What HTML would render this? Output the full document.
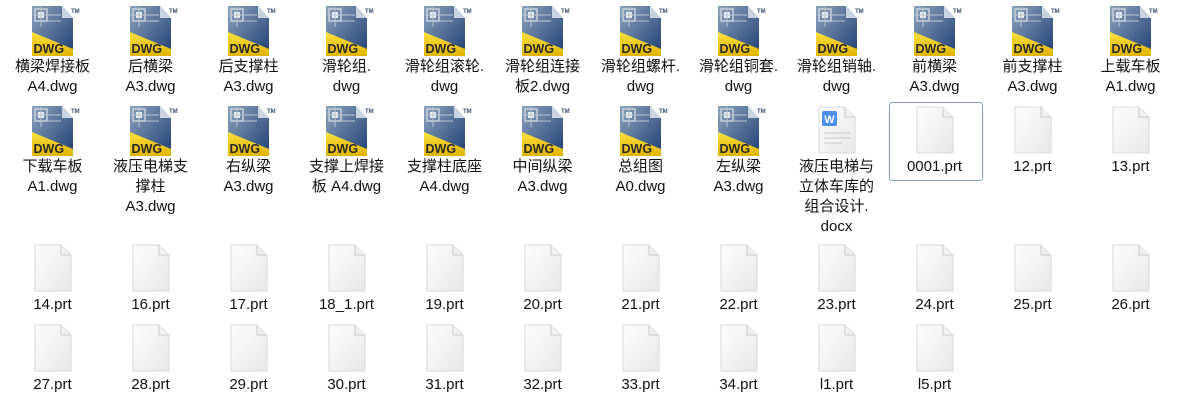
<!DOCTYPE html>
<html><head><meta charset="utf-8"><style>
body{margin:0;width:1181px;height:409px;background:#fff;position:relative;overflow:hidden;font-family:"Liberation Sans","Noto Sans CJK SC",sans-serif;font-size:15px;color:#111}
.c{position:absolute;width:96px;text-align:center}
.ic{height:54px;position:relative}
.ic svg{position:absolute;left:50%;transform:translateX(-50%)}
.t{line-height:20px;margin-top:0}
.sel{position:absolute;left:889px;top:102px;width:92px;height:77px;border:1px solid #7da2ce;border-radius:3px;background:#fff}
</style></head><body>
<svg width="0" height="0" style="position:absolute"><defs>
<linearGradient id="bl" x1="0" y1="0" x2="1" y2="1"><stop offset="0" stop-color="#8aa2bd"/><stop offset="1" stop-color="#1f3f72"/></linearGradient>
<linearGradient id="yl" x1="0" y1="0" x2="0" y2="1"><stop offset="0" stop-color="#f9e040"/><stop offset="1" stop-color="#e2b400"/></linearGradient>
<linearGradient id="pg" x1="0" y1="0" x2="1" y2="1"><stop offset="0" stop-color="#fdfdfd"/><stop offset="1" stop-color="#e8e8e8"/></linearGradient>
<symbol id="dwg" viewBox="0 0 52 52">
<path d="M1 1H31L42 13V51H1Z" fill="url(#bl)"/>
<path d="M31 1V13H42" fill="#c9d4e2"/>
<rect x="4" y="4" width="12" height="12" fill="none" stroke="#c8d0dc" stroke-width="1.5"/>
<rect x="7" y="7" width="6" height="6" fill="#e6ecf2"/>
<path d="M10 2V22M2 10H30M16 16H30" stroke="#b9c3d1" stroke-width="1"/>
<path d="M1 27L42 44V51H1Z" fill="url(#yl)"/>
<text x="2.5" y="48" font-family="Liberation Sans" font-weight="bold" font-size="12.5" fill="#2a2a2a">DWG</text>
<text x="40" y="8" font-family="Liberation Sans" font-weight="bold" font-size="6" fill="#3b4f70">TM</text>
</symbol>
<symbol id="blank" viewBox="0 0 38 48">
<path d="M1 1H27L37 11V47H1Z" fill="url(#pg)" stroke="#dadada"/>
<path d="M27 1V11H37" fill="#f0f0f0" stroke="#cccccc"/>
</symbol>
<symbol id="docx" viewBox="0 0 38 48">
<path d="M1 1H27L37 11V47H1Z" fill="url(#pg)" stroke="#dadada"/>
<path d="M27 1V11H37" fill="#f0f0f0" stroke="#cccccc"/>
<rect x="4" y="5" width="15" height="15" rx="2" fill="#4a8ef0"/>
<text x="11.5" y="17" text-anchor="middle" font-family="Liberation Sans" font-weight="bold" font-size="11" fill="#fff">W</text>
<path d="M6 27H32M6 32H32M6 37H24" stroke="#c6c6c6"/>
</symbol>
</defs></svg>
<div class="sel"></div>
<div id="g"></div>
<script>
var rows=[
[3,[["dwg","横梁焊接板<br>A4.dwg"],["dwg","后横梁<br>A3.dwg"],["dwg","后支撑柱<br>A3.dwg"],["dwg","滑轮组.<br>dwg"],["dwg","滑轮组滚轮.<br>dwg"],["dwg","滑轮组连接<br>板2.dwg"],["dwg","滑轮组螺杆.<br>dwg"],["dwg","滑轮组铜套.<br>dwg"],["dwg","滑轮组销轴.<br>dwg"],["dwg","前横梁<br>A3.dwg"],["dwg","前支撑柱<br>A3.dwg"],["dwg","上载车板<br>A1.dwg"]]],
[103,[["dwg","下载车板<br>A1.dwg"],["dwg","液压电梯支<br>撑柱<br>A3.dwg"],["dwg","右纵梁<br>A3.dwg"],["dwg","支撑上焊接<br>板 A4.dwg"],["dwg","支撑柱底座<br>A4.dwg"],["dwg","中间纵梁<br>A3.dwg"],["dwg","总组图<br>A0.dwg"],["dwg","左纵梁<br>A3.dwg"],["docx","液压电梯与<br>立体车库的<br>组合设计.<br>docx"],["blank","0001.prt"],["blank","12.prt"],["blank","13.prt"]]],
[241,["14","16","17","18_1","19","20","21","22","23","24","25","26"].map(function(s){return["blank",s+".prt"]})],
[321,["27","28","29","30","31","32","33","34","l1","l5"].map(function(s){return["blank",s+".prt"]})]
];
var h="";
rows.forEach(function(r){r[1].forEach(function(it,i){
var cx=52.5+98*i;
var svg=it[0]=="dwg"?'<svg width="52" height="52" style="top:2px;margin-left:4px"><use href="#dwg"/></svg>':'<svg width="38" height="48" style="top:3px"><use href="#'+it[0]+'"/></svg>';
h+='<div class="c" style="left:'+(cx-48)+'px;top:'+r[0]+'px"><div class="ic">'+svg+'</div><div class="t">'+it[1]+'</div></div>';
});});
document.getElementById("g").innerHTML=h;
</script>
</body></html>
